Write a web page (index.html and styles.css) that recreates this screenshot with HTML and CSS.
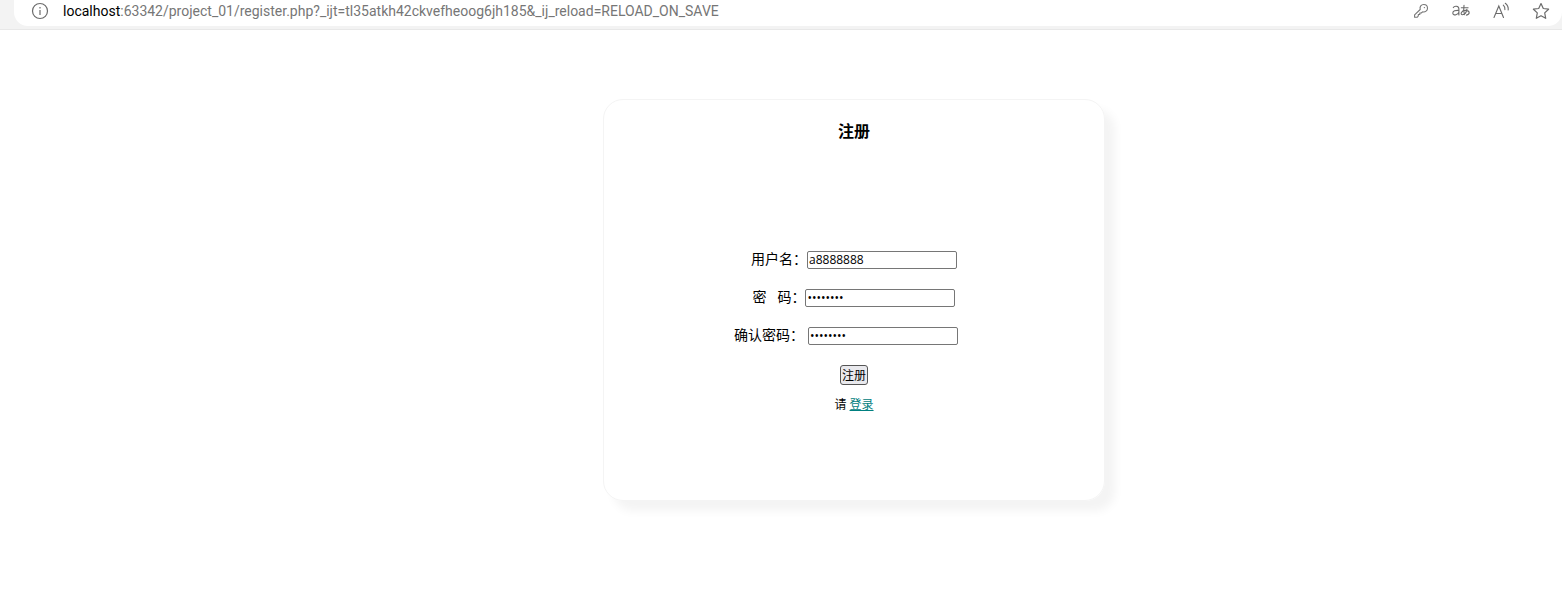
FILE: index.html
```html
<!DOCTYPE html>
<html lang="zh-CN">
<head>
<meta charset="utf-8">
<title>注册</title>
<link rel="stylesheet" href="styles.css">
</head>
<body>
<header class="toolbar">
  <div class="address">
    <svg class="info" width="18" height="18" viewBox="0 0 18 18" fill="none" stroke="#6b6b6b" stroke-width="1.2"><circle cx="9" cy="9" r="7.5"/><path d="M9 8v5M9 5v1.4"/></svg>
    <div class="url"><span class="host">localhost</span>:63342/project_01/register.php?_ijt=tl35atkh42ckvefheoog6jh185&amp;_ij_reload=RELOAD_ON_SAVE</div>
    <div class="actions">
      <button class="action" type="button" aria-label="密码"><svg width="18" height="18" viewBox="0 0 18 18" fill="none" stroke="#767676" stroke-width="1.1" stroke-linejoin="round"><path d="M8.2 7.5C7.4 4.300 9.300 2.500 11.700 2.500c2.300 0 3.800 1.700 3.800 3.700 0 2.500-2.200 4.200-4.900 3.600L9.300 11H7.800v1.500H6.300V14l-1.200 1.300H2.600v-2.500z"/><circle cx="12.400" cy="5.600" r=".7" fill="#767676" stroke="none"/></svg></button>
      <button class="action" type="button" aria-label="翻译"><svg width="18" height="18" viewBox="0 0 18 18" fill="none" stroke="#6b6b6b" stroke-width="1.100" stroke-linecap="round"><path d="M1.300 5.600C2.300 3.700 6.900 3.500 6.900 7v6M6.900 8.400C3.500 8.200.8 8.800.8 10.900c0 3 5.300 2.600 6.100-.7M9.300 5.700h6.800M12 3.300c-.5 3.200-.5 6.500.4 9.400M15 7.200c-.6 3.200-2.500 5.500-4.500 5.500-2.700 0-1.200-4.300 3.100-4.300 4.700 0 4.500 4.200.8 4.700"/></svg></button>
      <button class="action" type="button" aria-label="朗读"><svg width="18" height="18" viewBox="0 0 18 18" fill="none" stroke="#6b6b6b" stroke-width="1.100" stroke-linecap="round"><path d="M2 15.500 6.800 4l4.700 11.500M3.700 11.500h6.200M11.300 3.200c1.300 1.200 1.800 2.600 1.600 4.400M13.300 1.300c2.300 1.800 3.200 4 2.900 6.700"/></svg></button>
      <button class="action" type="button" aria-label="收藏"><svg width="18" height="18" viewBox="0 0 18 18" fill="none" stroke="#6b6b6b" stroke-width="1.200" stroke-linejoin="round"><path d="m9 1.600 2.300 4.900 5.300.7-3.900 3.700 1 5.400L9 13.700l-4.700 2.600 1-5.400L1.400 7.200l5.300-.7z"/></svg></button>
    </div>
  </div>
</header>
<main class="page">
  <form class="card">
    <h1 class="title">注册</h1>
    <div class="field"><label class="label" for="user">用户名：</label><input class="box" id="user" type="text" value="a8888888"></div>
    <div class="field"><label class="label" for="pass">密&nbsp;&nbsp;&nbsp;码：</label><input class="box" id="pass" type="password" value="a8888888"></div>
    <div class="field confirm"><label class="label" for="again">确认密码：</label><input class="box" id="again" type="password" value="a8888888"></div>
    <button class="submit" type="button">注册</button>
    <p class="hint">请 <a class="login" href="#">登录</a></p>
  </form>
</main>
</body>
</html>
```
FILE: styles.css
```css
body {
  margin: 0;
  background: #fff;
  color: #000;
  font-family: "Open Sans", "Noto Sans CJK SC", sans-serif;
}

.toolbar {
  height: 29px;
  background: #f3f3f3;
  border-bottom: 1px solid #e8e8e8;
}

.address {
  display: flex;
  align-items: center;
  box-sizing: border-box;
  height: 26px;
  margin-left: 14px;
  padding: 0 12px 4px 17px;
  background: #fff;
  border-radius: 0 0 14px 14px;
}

.info {
  flex: none;
}

.url {
  flex: 1;
  margin-left: 14px;
  color: #767676;
  font: 14px/20px Roboto, sans-serif;
  white-space: nowrap;
}

.host {
  color: #000;
}

.actions {
  display: flex;
  gap: 22px;
}

.action {
  display: flex;
  padding: 0;
  border: 0;
  background: none;
}

.page {
  display: flex;
  justify-content: center;
  padding: 69px 0 40px 146px;
}

.card {
  display: flex;
  flex-direction: column;
  align-items: center;
  width: 500px;
  min-height: 400px;
  border: 1px solid #f4f4f4;
  border-radius: 20px;
  box-shadow: 10px 10px 10px #f4f4f4;
}

.title {
  margin: 19px 0 108px;
  font-size: 16px;
  line-height: 24px;
}

.field {
  display: flex;
  align-items: center;
  height: 18px;
  margin-bottom: 20px;
}

.label {
  padding-bottom: 2px;
  font-size: 14px;
  line-height: 18px;
}

.confirm {
  gap: 4px;
  padding-right: 16px;
}

.box {
  box-sizing: border-box;
  width: 150px;
  height: 18px;
  padding: 0 1px 1px;
  border: 1px solid #767676;
  border-radius: 2px;
  background: #fff;
  color: #000;
  font: 12px "Open Sans", sans-serif;
}

.submit {
  height: 20px;
  padding: 0 1px;
  border: 1px solid #555;
  border-radius: 3px;
  background: #e9e9ed;
  color: #000;
  font: 12px/16px "Noto Sans CJK SC", sans-serif;
}

.hint {
  margin: 11px 0 0;
  font-size: 12px;
  line-height: 18px;
}

.login {
  color: #008080;
}
```
